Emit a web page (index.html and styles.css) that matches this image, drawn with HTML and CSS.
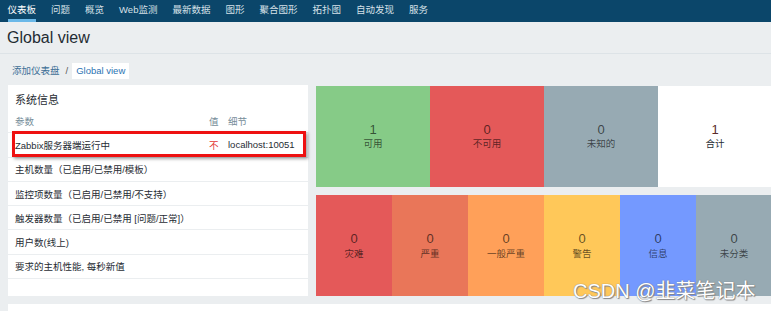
FILE: index.html
```html
<!DOCTYPE html>
<html lang="zh">
<head>
<meta charset="utf-8">
<title>Global view</title>
<link rel="stylesheet" href="styles.css">
</head>
<body>
<nav class="topnav">
  <a class="nav-item active">仪表板</a>
  <a class="nav-item">问题</a>
  <a class="nav-item">概览</a>
  <a class="nav-item">Web监测</a>
  <a class="nav-item">最新数据</a>
  <a class="nav-item">图形</a>
  <a class="nav-item">聚合图形</a>
  <a class="nav-item">拓扑图</a>
  <a class="nav-item">自动发现</a>
  <a class="nav-item">服务</a>
</nav>
<header class="page-title">
  <h1>Global view</h1>
</header>
<div class="breadcrumbs">
  <a class="crumb-link">添加仪表盘</a>
  <span class="crumb-sep">/</span>
  <span class="crumb-current">Global view</span>
</div>
<main class="dashboard">
  <section class="panel sysinfo">
    <div class="panel-head">系统信息</div>
    <div class="info-row info-headrow">
      <span class="c-param">参数</span><span class="c-val">值</span><span class="c-detail">细节</span>
    </div>
    <div class="info-row highlighted">
      <span class="c-param">Zabbix服务器端运行中</span><span class="c-val red">不</span><span class="c-detail">localhost:10051</span>
    </div>
    <div class="info-row"><span class="c-param">主机数量（已启用/已禁用/模板）</span></div>
    <div class="info-row"><span class="c-param">监控项数量（已启用/已禁用/不支持）</span></div>
    <div class="info-row"><span class="c-param">触发器数量（已启用/已禁用 [问题/正常]）</span></div>
    <div class="info-row"><span class="c-param">用户数(线上)</span></div>
    <div class="info-row"><span class="c-param">要求的主机性能, 每秒新值</span></div>
  </section>
  <section class="panel status host-status">
    <div class="cell green"><span class="num">1</span><span class="lbl">可用</span></div>
    <div class="cell red-bg"><span class="num">0</span><span class="lbl">不可用</span></div>
    <div class="cell grey"><span class="num">0</span><span class="lbl">未知的</span></div>
    <div class="cell white"><span class="num">1</span><span class="lbl">合计</span></div>
  </section>
  <section class="panel status problem-status">
    <div class="cell disaster"><span class="num">0</span><span class="lbl">灾难</span></div>
    <div class="cell high"><span class="num">0</span><span class="lbl">严重</span></div>
    <div class="cell average"><span class="num">0</span><span class="lbl">一般严重</span></div>
    <div class="cell warning"><span class="num">0</span><span class="lbl">警告</span></div>
    <div class="cell info"><span class="num">0</span><span class="lbl">信息</span></div>
    <div class="cell grey"><span class="num">0</span><span class="lbl">未分类</span></div>
  </section>
  <section class="panel next-panel"></section>
</main>
<div class="watermark">CSDN @韭菜笔记本</div>
</body>
</html>
```
FILE: styles.css
```css
html, body {
  margin: 0;
  padding: 0;
}
body {
  width: 771px;
  height: 311px;
  overflow: hidden;
  background: #ebeef0;
  font-family: "Liberation Sans", "Noto Sans CJK SC", sans-serif;
  color: #1f2c33;
  position: relative;
}
.topnav {
  height: 22px;
  background: #0b466a;
  display: flex;
  align-items: stretch;
  padding-left: 0;
}
.nav-item {
  margin: 0 7.5px;
  font-size: 9.5px;
  line-height: 19px;
  color: #d6e0e7;
  border-bottom: 3px solid transparent;
  white-space: nowrap;
}
.nav-item.active {
  color: #ffffff;
  border-bottom-color: #6ab8e8;
}
.page-title {
  height: 32px;
  box-sizing: border-box;
  border-bottom: 1px solid #dde3e7;
  padding: 0 7px;
  display: flex;
  align-items: center;
}
.page-title h1 {
  margin: 0;
  font-size: 16px;
  font-weight: normal;
  color: #1f2c33;
  line-height: 20px;
}
.breadcrumbs {
  height: 31px;
  padding: 9px 0 0 12px;
  box-sizing: border-box;
  display: flex;
  align-items: flex-start;
  font-size: 9.5px;
}
.crumb-link {
  color: #3e6f97;
  line-height: 16px;
}
.crumb-sep {
  color: #555;
  margin: 0 4px 0 6px;
  line-height: 16px;
}
.crumb-current {
  background: #ffffff;
  color: #2b73b3;
  padding: 0 4px;
  line-height: 16px;
}
.dashboard {
  display: grid;
  grid-template-columns: 300px 456px;
  grid-template-rows: 102px 101px;
  column-gap: 8px;
  row-gap: 8px;
  padding-left: 8px;
}
.panel {
  background: #ffffff;
}
.sysinfo {
  grid-row: 1 / 3;
  position: relative;
}
.host-status {
  grid-column: 2;
  grid-row: 1;
  margin-top: 1px;
}
.problem-status {
  grid-column: 2;
  grid-row: 2;
}
.next-panel {
  grid-column: 1 / 3;
  height: 20px;
}
.panel-head {
  height: 24px;
  box-sizing: border-box;
  padding: 8px 7px 0;
  font-size: 11px;
  line-height: 14px;
  color: #1f2c33;
}
.info-row {
  height: 24.3px;
  box-sizing: border-box;
  border-bottom: 1px solid #ebeef0;
  display: flex;
  align-items: center;
  padding: 0 7px;
  font-size: 9.5px;
  white-space: nowrap;
  position: relative;
}
.info-headrow {
  color: #768d99;
}
.c-param {
  width: 194px;
}
.c-val {
  width: 19px;
}
.c-detail {
  flex: 1;
}
.red {
  color: #e33734;
}
.highlighted::after {
  content: "";
  position: absolute;
  left: 4px;
  top: -2px;
  width: 288px;
  height: 20px;
  border: 3px solid #ee1111;
  box-shadow: 2px 2px 3px rgba(0, 0, 0, 0.35);
}
.status {
  display: flex;
}
.cell {
  flex: 1;
  display: flex;
  flex-direction: column;
  align-items: center;
  justify-content: center;
  color: rgba(0, 0, 0, 0.62);
}
.num {
  font-size: 13px;
  line-height: 14px;
}
.lbl {
  font-size: 9.5px;
  line-height: 13px;
}
.problem-status .num {
  line-height: 16px;
}
.green { background: #86cb87; }
.red-bg { background: #e45959; }
.grey { background: #97aab3; }
.white { background: #ffffff; color: #1f2c33; }
.white .num { color: #5a2a2a; }
.disaster { background: #e45959; }
.high { background: #e97659; }
.average { background: #ffa059; }
.warning { background: #ffc859; }
.info { background: #7499ff; }
.watermark {
  position: absolute;
  left: 573px;
  top: 279px;
  font-size: 20px;
  line-height: 24px;
  color: #ffffff;
  text-shadow: 0 0 1px #666, 1px 1px 1px #888;
  white-space: nowrap;
}
```
